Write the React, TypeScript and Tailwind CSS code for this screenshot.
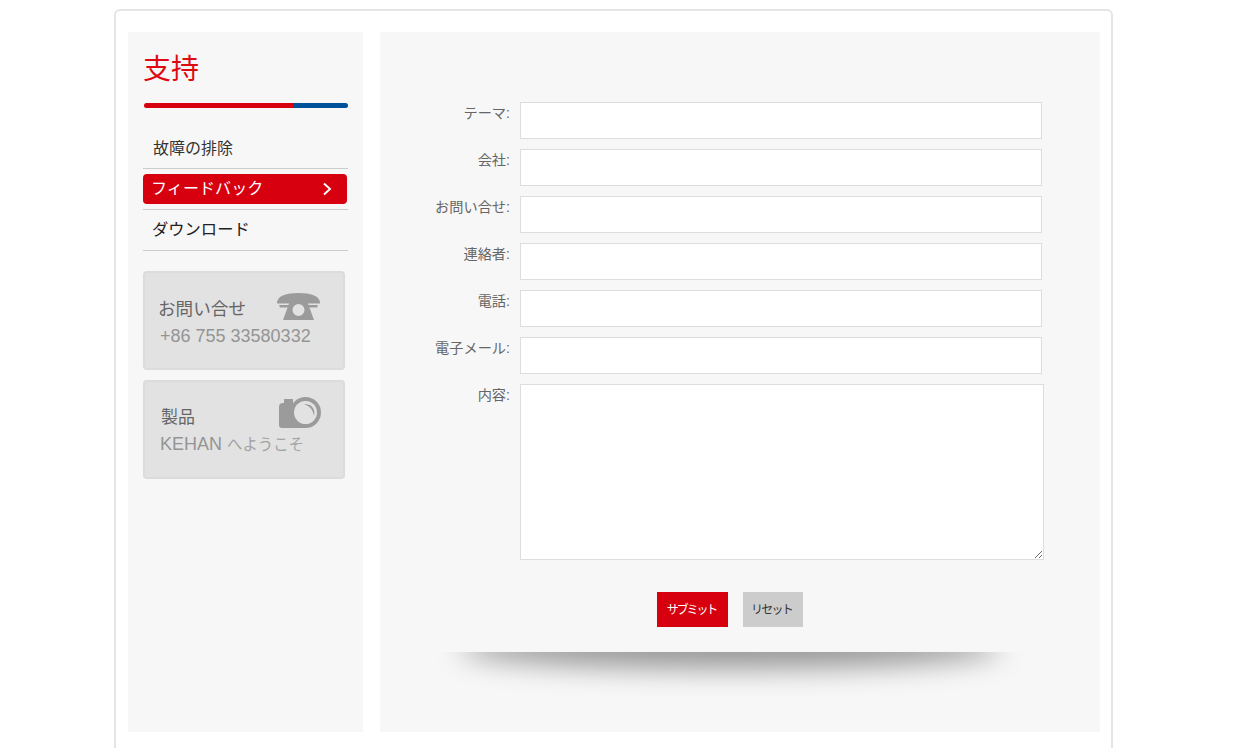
const jp = "font-['Arial','Liberation_Sans','Noto_Sans_CJK_JP',sans-serif]";

function Phone() {
  return (
    <svg width="43" height="27" viewBox="0 0 43 27" className="block" fill="#9b9b9b">
      <path d="M0 9 C1 3 9 0 21.5 0 C34 0 42 3 43 9 L43 10.5 L0 10.5 Z" />
      <path d="M2 12 L13 12 L13 14.5 L3 14.5 Z M30 12 L41 12 L40 14.5 L30 14.5 Z" />
      <path fillRule="evenodd" d="M13 8 L30 8 L37 27 L6 27 Z M21.5 11 A6 6 0 1 0 21.5 23 A6 6 0 1 0 21.5 11 Z" />
    </svg>
  );
}

function Camera() {
  return (
    <svg width="42" height="31" viewBox="0 0 42 31" className="block" fill="#9b9b9b">
      <path d="M0 10 Q0 6 4 6 L5 6 L5 2 L14 2 L14 6 L26 6 L26 31 L3 31 Q0 31 0 28 Z" />
      <circle cx="26.5" cy="15.5" r="15.5" />
      <circle cx="26.5" cy="15.5" r="11.5" fill="#e2e2e2" />
      <path d="M25 7.5 C31 6 37 11 35 19 C34 12 30 8.5 25 7.5 Z" />
    </svg>
  );
}

function Field({ label }: { label: string }) {
  return (
    <div className="flex mb-[10px]">
      <label className="w-[130px] mr-[10px] text-right text-[14.2px] leading-[22px] text-[#666]">{label}:</label>
      <input className="w-[522px] h-[37px] bg-white border border-[#ddd] outline-none" />
    </div>
  );
}

export default function App() {
  return (
    <div className={`h-[748px] overflow-hidden bg-white ${jp}`}>
      <div className="w-[999px] ml-[114px] mt-[9px] h-[760px] border-2 border-[#e5e5e5] rounded-[6px] pt-[21px] pl-[12px] flex items-start bg-white">
        <aside className="w-[235px] h-[700px] bg-[#f7f7f7] pl-[15px] mr-[17px]">
          <h2 className="pt-[18px] text-[28px] leading-[40px] text-[#dd0a14] font-normal">支持</h2>
          <div className="ml-[1px] mt-[13px] w-[204px] h-[5px] rounded-full overflow-hidden flex">
            <div className="w-[149px] bg-[#d7000f]" />
            <div className="flex-1 bg-[#00519b]" />
          </div>
          <nav className="mt-[20px] w-[205px]">
            <div className="h-[41px] pl-[10px] pt-[10px] text-[16px] leading-[22px] text-[#333] border-b border-[#ccc]">故障の排除</div>
            <div className="mt-[5px] h-[30px] w-[204px] rounded-[4px] bg-[#d7000f] pl-[9px] pr-[15px] flex items-center justify-between text-[16px] text-white">
              <span className="-ml-[1px] tracking-[0.1px]">フィードバック</span>
              <svg width="10" height="14" viewBox="0 0 10 14" fill="none" stroke="#fff" strokeWidth="1.9"><path d="M2 1.5 L8 7 L2 12.5" /></svg>
            </div>
            <div className="mt-[5px] border-t border-[#ccc] h-[42px] pl-[9px] pt-[8px] text-[16.3px] leading-[22px] text-[#222] border-b">ダウンロード</div>
          </nav>
          <div className="mt-[20px] w-[202px] h-[99px] bg-[#e2e2e2] border-2 border-[#dcdcdc] rounded-[4px] relative pl-[14px] pt-[23px]">
            <div className="-ml-[1px] text-[17.6px] leading-[26px] text-[#666]">お問い合せ</div>
            <div className="ml-[1px] mt-[2px] text-[18px] leading-[24px] text-[#949494]">+86 755 33580332</div>
            <div className="absolute right-[23px] top-[20px]"><Phone /></div>
          </div>
          <div className="mt-[10px] w-[202px] h-[99px] bg-[#e2e2e2] border-2 border-[#dcdcdc] rounded-[4px] relative pl-[15px] pt-[23px]">
            <div className="ml-[1px] text-[17px] leading-[26px] text-[#666]">製品</div>
            <div className="mt-[1px] text-[18px] leading-[24px] text-[#949494]">
              KEHAN <span className="text-[15.4px] text-[#a3a3a3]">へようこそ</span>
            </div>
            <div className="absolute right-[22px] top-[15px]"><Camera /></div>
          </div>
        </aside>
        <main className="w-[720px] h-[700px] bg-[#f7f7f7] pt-[70px]">
          <Field label="テーマ" />
          <Field label="会社" />
          <Field label="お問い合せ" />
          <Field label="連絡者" />
          <Field label="電話" />
          <Field label="電子メール" />
          <div className="flex">
            <label className="w-[130px] mr-[10px] text-right text-[14.2px] leading-[22px] text-[#666]">内容:</label>
            <textarea className="w-[524px] h-[176px] bg-white border border-[#ddd] outline-none" />
          </div>
          <div className="mt-[32px] ml-[277px] flex gap-[15px]">
            <button className="w-[71px] h-[35px] pr-[2px] bg-[#d7000f] text-white text-[12px] tracking-[-2.1px]">サブミット</button>
            <button className="w-[60px] h-[35px] pr-[3px] bg-[#ccc] text-[#333] text-[12px] tracking-[-1.8px]">リセット</button>
          </div>
          <div className="mt-[25px] ml-[40px] w-[620px] h-[45px] overflow-hidden relative">
            <div className="absolute left-[40px] top-[-24px] w-[540px] h-[40px] rounded-[50%] bg-black/40 blur-[14px]" />
          </div>
        </main>
      </div>
    </div>
  );
}
